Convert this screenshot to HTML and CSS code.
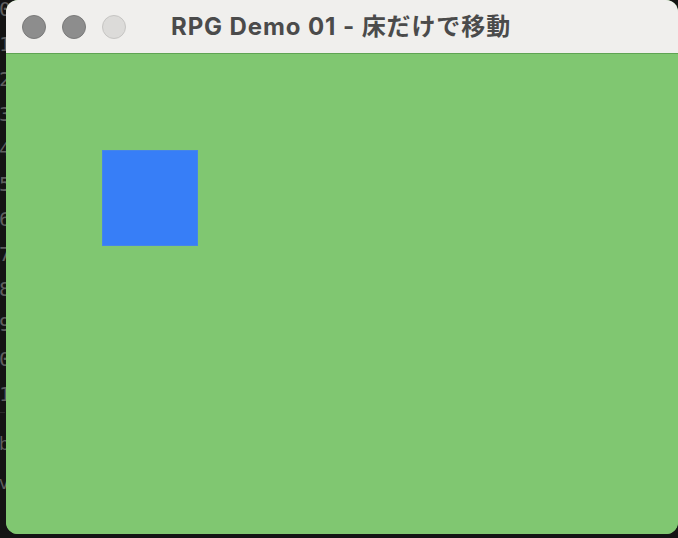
FILE: index.html
```html
<!DOCTYPE html>
<html lang="ja">
<head>
<meta charset="utf-8">
<title>RPG Demo 01</title>
<link rel="stylesheet" href="styles.css">
</head>
<body>
<div class="gutter">
  <span>0</span><span>1</span><span>2</span><span>3</span><span>4</span><span>5</span>
  <span>6</span><span>7</span><span>8</span><span>9</span><span>0</span><span>1</span>
  <div class="rule"></div>
  <span class="low">b</span><span class="low">v</span>
</div>
<div class="window">
  <div class="titlebar">
    <div class="lights">
      <span class="light dark"></span>
      <span class="light dark"></span>
      <span class="light off"></span>
    </div>
    <div class="title">RPG Demo 01 - 床だけで移動</div>
  </div>
  <div class="stage">
    <div class="player"></div>
  </div>
</div>
</body>
</html>
```
FILE: styles.css
```css
html, body {
  margin: 0;
  padding: 0;
  width: 678px;
  height: 538px;
  overflow: hidden;
  background: #141414;
}
body {
  position: relative;
}
.gutter {
  display: flex;
  flex-direction: column;
  margin-left: -1px;
  margin-top: -8px;
  font-family: "DejaVu Sans Mono", monospace;
  font-size: 20px;
  color: #5e5e5e;
}
.gutter span {
  height: 35px;
  line-height: 35px;
}
.gutter .rule {
  height: 1px;
  width: 6px;
  background: #2a2a2a;
  margin: 0 0 21px 0;
}
.gutter .low {
  font-family: "DejaVu Sans", sans-serif;
  font-size: 17px;
  height: 39px;
  line-height: 20px;
}
.window {
  position: absolute;
  left: 6px;
  top: 0;
  width: 672px;
  height: 534px;
  border-radius: 12px;
  overflow: hidden;
  display: flex;
  flex-direction: column;
  background: #80c771;
}
.titlebar {
  height: 53px;
  flex: none;
  background: #f0efed;
  border-bottom: 1px solid #5fa453;
  display: flex;
  align-items: center;
}
.lights {
  display: flex;
  gap: 16px;
  padding-left: 16px;
}
.light {
  width: 24px;
  height: 24px;
  border-radius: 50%;
  box-sizing: border-box;
}
.light.dark {
  background: #8d8d8d;
  border: 1px solid #7a7a7a;
}
.light.off {
  background: #dcdbd9;
  border: 1px solid #c6c5c3;
}
.title {
  margin-left: 45px;
  padding-bottom: 5px;
  font-family: "Inter", "Noto Sans CJK JP", sans-serif;
  font-weight: 700;
  font-size: 24px;
  letter-spacing: 0.9px;
  color: #4b4b4b;
}
.stage {
  flex: 1;
  background: #80c771;
  padding: 96px 0 0 96px;
}
.player {
  width: 96px;
  height: 96px;
  background: #377ef7;
  box-shadow: inset 0 0 0 1px #4585e8;
}
```
